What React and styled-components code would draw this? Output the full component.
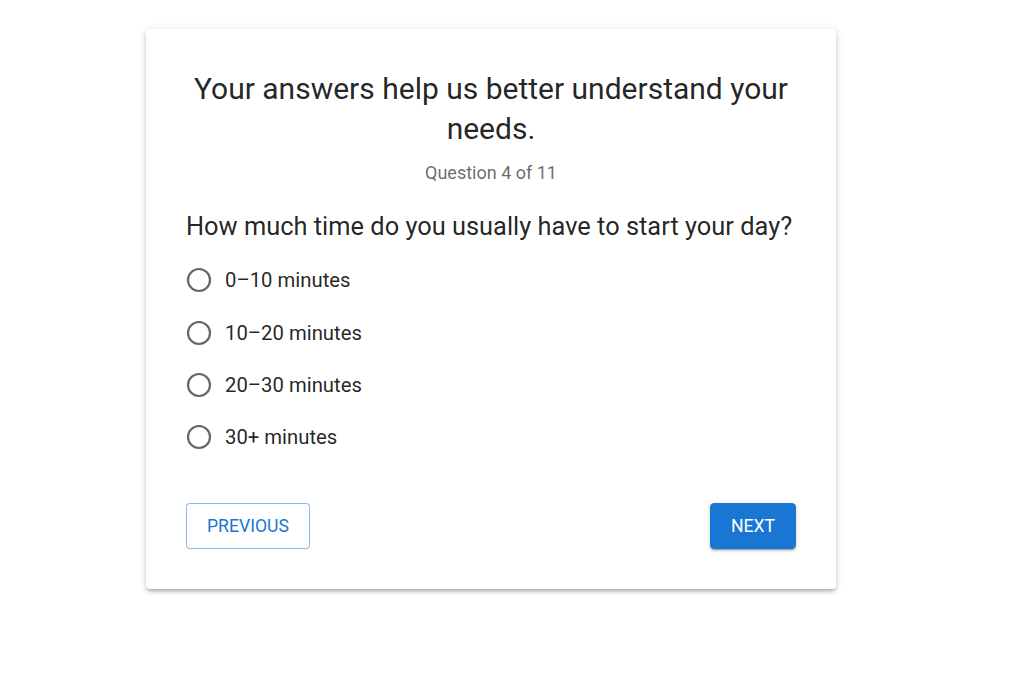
import React from 'react';
import styled, { createGlobalStyle } from 'styled-components';

const GlobalStyle = createGlobalStyle`
  html, body {
    margin: 0;
    padding: 0;
    background: #fff;
    font-family: Roboto, "Helvetica", Arial, sans-serif;
  }
`;

const Page = styled.div`
  padding: 29px 0 40px 146px;
`;

const Card = styled.div`
  width: 690px;
  box-sizing: border-box;
  padding: 40px;
  background: #fff;
  border-radius: 4px;
  box-shadow: 0px 3px 3px -2px rgba(0,0,0,0.2), 0px 3px 4px 0px rgba(0,0,0,0.14), 0px 1px 8px 0px rgba(0,0,0,0.12);
  color: rgba(0, 0, 0, 0.87);
`;

const Title = styled.h1`
  margin: 0;
  text-align: center;
  font-size: 30px;
  font-weight: 400;
  line-height: 40px;
`;

const Progress = styled.div`
  margin-top: 11px;
  text-align: center;
  font-size: 18px;
  line-height: 26px;
  color: rgba(0, 0, 0, 0.6);
`;

const Question = styled.h2`
  margin: 23px 0 0;
  font-size: 25.4px;
  font-weight: 400;
  line-height: 34px;
`;

const Options = styled.div`
  display: flex;
  flex-direction: column;
  margin-top: 11px;
`;

const Option = styled.label`
  display: flex;
  align-items: center;
  gap: 13px;
  height: 52.4px;
  font-size: 20.3px;
  cursor: pointer;
`;

const RadioIcon = styled.svg`
  width: 26px;
  height: 26px;
  flex: none;
`;

const Actions = styled.div`
  display: flex;
  justify-content: space-between;
  margin-top: 39px;
`;

const Button = styled.button`
  height: 46px;
  box-sizing: border-box;
  padding: 0 20px;
  font-family: Roboto, Arial, sans-serif;
  font-size: 17.6px;
  font-weight: 400;
  text-transform: uppercase;
  border-radius: 4px;
  cursor: pointer;
  border: 1px solid ${p => (p.$primary ? '#1976d2' : 'rgba(25, 118, 210, 0.5)')};
  background: ${p => (p.$primary ? '#1976d2' : '#fff')};
  color: ${p => (p.$primary ? '#fff' : '#1976d2')};
  box-shadow: ${p => (p.$primary
    ? '0px 3px 1px -2px rgba(0,0,0,0.2), 0px 2px 2px 0px rgba(0,0,0,0.14), 0px 1px 5px 0px rgba(0,0,0,0.12)'
    : 'none')};
`;

const options = ['0–10 minutes', '10–20 minutes', '20–30 minutes', '30+ minutes'];

function Radio() {
  return (
    <RadioIcon viewBox="0 0 26 26">
      <circle cx="13" cy="13" r="11" fill="none" stroke="#666" strokeWidth="2.2" />
    </RadioIcon>
  );
}

export default function App() {
  return (
    <>
      <GlobalStyle />
      <Page>
        <Card>
          <Title>Your answers help us better understand your needs.</Title>
          <Progress>Question 4 of 11</Progress>
          <Question>How much time do you usually have to start your day?</Question>
          <Options>
            {options.map(o => (
              <Option key={o}>
                <Radio />
                {o}
              </Option>
            ))}
          </Options>
          <Actions>
            <Button type="button">Previous</Button>
            <Button type="button" $primary>Next</Button>
          </Actions>
        </Card>
      </Page>
    </>
  );
}
